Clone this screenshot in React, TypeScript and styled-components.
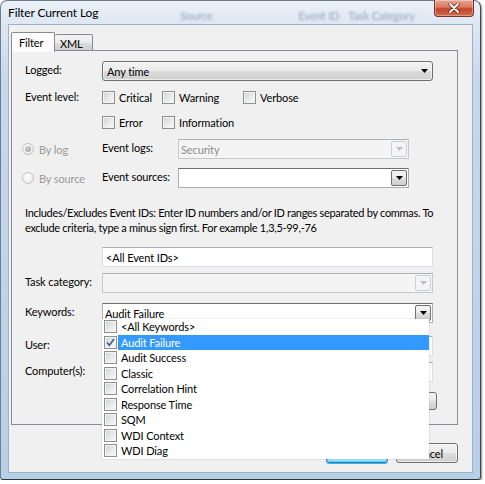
import * as React from 'react'
import styled, { createGlobalStyle } from 'styled-components'

const GlobalStyle = createGlobalStyle`
  html, body {
    margin: 0;
    padding: 0;
    background: #fff;
  }
  body {
    font-family: Lato, "Noto Sans", "Liberation Sans", sans-serif;
    font-size: 11px;
    letter-spacing: -0.12px;
    color: #000;
  }
  * {
    box-sizing: border-box;
  }
`

const Window = styled.div`
  width: 481px;
  height: 480px;
  display: flex;
  flex-direction: column;
  padding: 0 7px 6px 7px;
  border: 1px solid #6f7d8c;
  border-right-color: #3e4650;
  border-bottom-color: #2f343a;
  border-radius: 7px 7px 3px 3px;
  background: linear-gradient(180deg, #eaf1f8 0px, #dde7f2 24px, #c6d8ec 80px, #b8cfe8 100%);
  box-shadow: 1px 1px 2px rgba(0, 0, 0, 0.45);
`

const TitleBar = styled.div`
  display: flex;
  align-items: flex-start;
  height: 23px;
  margin-right: -1px;
`

const Title = styled.div`
  flex: none;
  font-size: 12px;
  padding-top: 4px;
  line-height: 15px;
  white-space: nowrap;
`

const Ghosts = styled.div`
  flex: 1;
  min-width: 0;
  display: flex;
  padding-top: 8px;
  color: #95a5b8;
  filter: blur(1.3px);
  white-space: nowrap;
`

const Ghost = styled.span<{ $ml: number }>`
  margin-left: ${p => p.$ml}px;
`

const CloseButton = styled.div`
  flex: none;
  width: 40px;
  height: 17px;
  margin-top: -1px;
  display: flex;
  align-items: center;
  justify-content: center;
  border: 1px solid #7a3126;
  border-top: none;
  border-radius: 0 0 4px 4px;
  background: linear-gradient(180deg, #e8a595 0%, #d9785f 45%, #c4452a 55%, #d2694c 100%);
  box-shadow: inset 0 0 0 1px rgba(255, 255, 255, 0.35);
`

const Client = styled.div`
  flex: 1;
  display: flex;
  flex-direction: column;
  padding: 6px 0 0 2px;
  background: #f0f0f0;
  border: 1px solid #9fb1c5;
`

const TabStrip = styled.div`
  display: flex;
  align-items: flex-end;
  height: 20px;
  position: relative;
  z-index: 2;
`

const Tab = styled.div<{ $active?: boolean }>`
  height: ${p => (p.$active ? 20 : 17)}px;
  padding: ${p => (p.$active ? '2px 0 0 7px' : '1px 0 0 5px')};
  width: ${p => (p.$active ? 44 : 38)}px;
  border: 1px solid #898c95;
  border-bottom: ${p => (p.$active ? 'none' : '1px solid #898c95')};
  border-left: ${p => (p.$active ? '1px solid #898c95' : 'none')};
  border-radius: 2px 2px 0 0;
  background: ${p => (p.$active ? '#fcfcfc' : 'linear-gradient(180deg, #f3f3f3 0%, #ebebeb 50%, #dddddd 51%, #cfcfcf 100%)')};
  line-height: 15px;
  margin-bottom: ${p => (p.$active ? -1 : 0)}px;
`

const TabPanel = styled.div`
  width: 447px;
  height: 375px;
  margin-top: -1px;
  padding: 10px 0 0 10px;
  border: 1px solid #898c95;
  background: #f0f0f0;
  position: relative;
`

const FieldRow = styled.div<{ $mt?: number; $h?: number; $pl?: number }>`
  display: flex;
  align-items: center;
  height: ${p => p.$h ?? 20}px;
  margin-top: ${p => p.$mt ?? 0}px;
  padding-left: ${p => p.$pl ?? 3}px;
  position: relative;
`

const FieldLabel = styled.div<{ $w: number }>`
  width: ${p => p.$w}px;
  flex: none;
  align-self: flex-start;
  padding-top: 1px;
  line-height: 15px;
  white-space: nowrap;
`

const DropSelect = styled.div<{ $w: number }>`
  width: ${p => p.$w}px;
  height: 20px;
  display: flex;
  align-items: center;
  padding: 0 0 0 4px;
  border: 1px solid #707070;
  border-radius: 3px;
  background: linear-gradient(180deg, #f2f2f2 0%, #ebebeb 50%, #dddddd 51%, #cfcfcf 100%);
  box-shadow: inset 0 0 0 1px rgba(255, 255, 255, 0.6);
`

const Combo = styled.div<{ $w: number; $disabled?: boolean }>`
  width: ${p => p.$w}px;
  height: 20px;
  display: flex;
  align-items: center;
  padding: 0 1px 0 2px;
  border: 1px solid ${p => (p.$disabled ? '#c6c9cc' : '#abadb3')};
  border-top-color: ${p => (p.$disabled ? '#adb2b5' : '#707070')};
  background: ${p => (p.$disabled ? '#f4f4f4' : '#fff')};
  color: ${p => (p.$disabled ? '#8d8d8d' : '#000')};
`

const ComboText = styled.span`
  flex: 1;
  white-space: nowrap;
  line-height: 15px;
`

const ArrowButton = styled.div<{ $disabled?: boolean; $plain?: boolean }>`
  width: 16px;
  height: 16px;
  display: flex;
  align-items: center;
  justify-content: center;
  border: ${p => (p.$plain ? 'none' : `1px solid ${p.$disabled ? '#cdd0d4' : '#707070'}`)};
  border-radius: 2px;
  background: ${p => (p.$plain
    ? 'none'
    : p.$disabled
      ? '#f4f4f4'
      : 'linear-gradient(180deg, #f2f2f2 0%, #ebebeb 50%, #dddddd 51%, #cfcfcf 100%)')};
`

const TextBox = styled.div<{ $w: number }>`
  width: ${p => p.$w}px;
  height: 20px;
  display: flex;
  align-items: center;
  padding: 0 3px;
  border: 1px solid #dbdfe6;
  border-top-color: #abadb3;
  background: #fff;
  line-height: 15px;
`

const CheckLine = styled.div`
  display: flex;
  align-items: center;
`

const CheckItem = styled.label<{ $w: number }>`
  width: ${p => p.$w}px;
  display: flex;
  align-items: center;
  gap: 4px;
  line-height: 15px;
  white-space: nowrap;
`

const CheckBox = styled.span`
  width: 13px;
  height: 13px;
  flex: none;
  display: flex;
  align-items: center;
  justify-content: center;
  border: 1px solid #8e8f8f;
  background: linear-gradient(135deg, #cfd1d4 0%, #e9eaeb 55%, #fbfbfb 100%);
  box-shadow: inset 0 0 0 1px #f4f4f4;
`

const RadioItem = styled.div`
  width: 80px;
  flex: none;
  display: flex;
  align-items: center;
  gap: 5px;
  color: #9a9a9a;
  line-height: 15px;
  white-space: nowrap;
`

const Radio = styled.span<{ $on?: boolean }>`
  width: 12px;
  height: 12px;
  border-radius: 50%;
  flex: none;
  display: flex;
  align-items: center;
  justify-content: center;
  border: 1px solid #c3c3c3;
  background: radial-gradient(circle at 40% 35%, #ffffff 0%, #ececec 70%, #e0e0e0 100%);
  &::after {
    content: '';
    display: ${p => (p.$on ? 'block' : 'none')};
    width: 6px;
    height: 6px;
    border-radius: 50%;
    background: radial-gradient(circle at 40% 35%, #d0d0d0 0%, #9c9c9c 100%);
  }
`

const Note = styled.div`
  margin-top: 17px;
  padding-left: 3px;
  line-height: 15px;
  letter-spacing: -0.3px;
  white-space: nowrap;
`

const KeywordsBox = styled.div`
  position: relative;
`

const DropList = styled.div`
  position: absolute;
  left: 0;
  top: 16px;
  width: 327px;
  z-index: 5;
  background: #fff;
  box-shadow: 0 0 0 1px rgba(120, 120, 120, 0.12);
`

const DropItem = styled.div`
  height: 15.5px;
  display: flex;
  align-items: center;
  padding-left: 2px;
`

const DropText = styled.span<{ $selected?: boolean }>`
  flex: 1;
  height: 100%;
  display: flex;
  align-items: center;
  padding-left: 3px;
  margin-left: 1px;
  line-height: 15px;
  white-space: nowrap;
  background: ${p => (p.$selected ? '#3399ff' : 'transparent')};
  color: ${p => (p.$selected ? '#fff' : '#000')};
`

const SideButton = styled.div`
  width: 74px;
  height: 18px;
  margin-left: 261px;
  border: 1px solid #707070;
  border-radius: 3px;
  background: linear-gradient(180deg, #f2f2f2 0%, #ebebeb 50%, #dddddd 51%, #cfcfcf 100%);
`

const ButtonBar = styled.div`
  width: 447px;
  display: flex;
  justify-content: flex-end;
  gap: 8px;
  margin-top: 18px;
`

const PushButton = styled.div<{ $default?: boolean }>`
  width: 62px;
  height: 20px;
  display: flex;
  align-items: center;
  justify-content: center;
  border: 1px solid ${p => (p.$default ? '#3c7fb1' : '#707070')};
  border-radius: 3px;
  background: ${p => (p.$default
    ? 'linear-gradient(180deg, #eaf6fd 0%, #d9f0fc 50%, #bee6fd 51%, #a7d9f5 100%)'
    : 'linear-gradient(180deg, #f2f2f2 0%, #ebebeb 50%, #dddddd 51%, #cfcfcf 100%)')};
  box-shadow: ${p => (p.$default ? '0 1px 0 #35b3e6, inset 0 0 0 1px #48d6ff' : 'inset 0 0 0 1px rgba(255,255,255,0.6)')};
`

const Arrow = ({ muted }: { muted?: boolean }) => (
  <svg width="7" height="4" viewBox="0 0 7 4">
    <path d="M0 0 H7 L3.5 4 Z" fill={muted ? '#b9bcc0' : '#000'} />
  </svg>
)

const Check = ({ on }: { on?: boolean }) => (
  <CheckBox>
    {on && (
      <svg width="9" height="9" viewBox="0 0 9 9">
        <path d="M1 4.5 L3.4 7.2 L8 1" fill="none" stroke="#3f5a8c" strokeWidth="1.6" />
      </svg>
    )}
  </CheckBox>
)

const keywords = [
  '<All Keywords>',
  'Audit Failure',
  'Audit Success',
  'Classic',
  'Correlation Hint',
  'Response Time',
  'SQM',
  'WDI Context',
  'WDI Diag',
]

export default function App() {
  return (
    <>
      <GlobalStyle />
      <Window>
        <TitleBar>
          <Title>Filter Current Log</Title>
          <Ghosts>
            <Ghost $ml={82}>Source</Ghost>
            <Ghost $ml={86}>Event ID</Ghost>
            <Ghost $ml={9}>Task Category</Ghost>
          </Ghosts>
          <CloseButton>
            <svg width="12" height="10" viewBox="0 0 12 10">
              <path d="M2 1 L10 9 M10 1 L2 9" stroke="#5a2418" strokeWidth="3.2" strokeLinecap="round" />
              <path d="M2 1 L10 9 M10 1 L2 9" stroke="#fff" strokeWidth="1.8" strokeLinecap="round" />
            </svg>
          </CloseButton>
        </TitleBar>
        <Client>
          <TabStrip>
            <Tab $active>Filter</Tab>
            <Tab>XML</Tab>
          </TabStrip>
          <TabPanel>
            <FieldRow>
              <FieldLabel $w={77}>Logged:</FieldLabel>
              <DropSelect $w={331}>
                <ComboText>Any time</ComboText>
                <ArrowButton $plain>
                  <Arrow />
                </ArrowButton>
              </DropSelect>
            </FieldRow>

            <FieldRow $mt={7} $h={18}>
              <FieldLabel $w={77}>Event level:</FieldLabel>
              <CheckLine>
                <CheckItem $w={60}><Check />Critical</CheckItem>
                <CheckItem $w={81}><Check />Warning</CheckItem>
                <CheckItem $w={80}><Check />Verbose</CheckItem>
              </CheckLine>
            </FieldRow>
            <FieldRow $mt={7} $h={18}>
              <FieldLabel $w={77} />
              <CheckLine>
                <CheckItem $w={60}><Check />Error</CheckItem>
                <CheckItem $w={90}><Check />Information</CheckItem>
              </CheckLine>
            </FieldRow>

            <FieldRow $mt={8} $pl={0}>
              <RadioItem><Radio $on />By log</RadioItem>
              <FieldLabel $w={76}>Event logs:</FieldLabel>
              <Combo $w={231} $disabled>
                <ComboText>Security</ComboText>
                <ArrowButton $disabled><Arrow muted /></ArrowButton>
              </Combo>
            </FieldRow>
            <FieldRow $mt={9} $pl={0}>
              <RadioItem><Radio />By source</RadioItem>
              <FieldLabel $w={76}>Event sources:</FieldLabel>
              <Combo $w={231}>
                <ComboText />
                <ArrowButton><Arrow /></ArrowButton>
              </Combo>
            </FieldRow>

            <Note>
              Includes/Excludes Event IDs: Enter ID numbers and/or ID ranges separated by commas. To
              <br />
              exclude criteria, type a minus sign first. For example 1,3,5-99,-76
            </Note>

            <FieldRow $mt={12}>
              <FieldLabel $w={77} />
              <TextBox $w={331}>&lt;All Event IDs&gt;</TextBox>
            </FieldRow>
            <FieldRow $mt={6}>
              <FieldLabel $w={77}>Task category:</FieldLabel>
              <Combo $w={331} $disabled>
                <ComboText />
                <ArrowButton $disabled><Arrow muted /></ArrowButton>
              </Combo>
            </FieldRow>
            <FieldRow $mt={10}>
              <FieldLabel $w={77}>Keywords:</FieldLabel>
              <KeywordsBox>
                <Combo $w={331}>
                  <ComboText>Audit Failure</ComboText>
                  <ArrowButton><Arrow /></ArrowButton>
                </Combo>
                <DropList>
                  {keywords.map((k, i) => (
                    <DropItem key={k}>
                      <Check on={i === 1} />
                      <DropText $selected={i === 1}>{k}</DropText>
                    </DropItem>
                  ))}
                </DropList>
              </KeywordsBox>
            </FieldRow>
            <FieldRow $mt={13}>
              <FieldLabel $w={77}>User:</FieldLabel>
              <TextBox $w={331} />
            </FieldRow>
            <FieldRow $mt={6}>
              <FieldLabel $w={77}>Computer(s):</FieldLabel>
              <TextBox $w={331} />
            </FieldRow>
            <FieldRow $mt={10} $h={18}>
              <FieldLabel $w={77} />
              <SideButton />
            </FieldRow>
          </TabPanel>
          <ButtonBar>
            <PushButton $default>OK</PushButton>
            <PushButton>Cancel</PushButton>
          </ButtonBar>
        </Client>
      </Window>
    </>
  )
}
